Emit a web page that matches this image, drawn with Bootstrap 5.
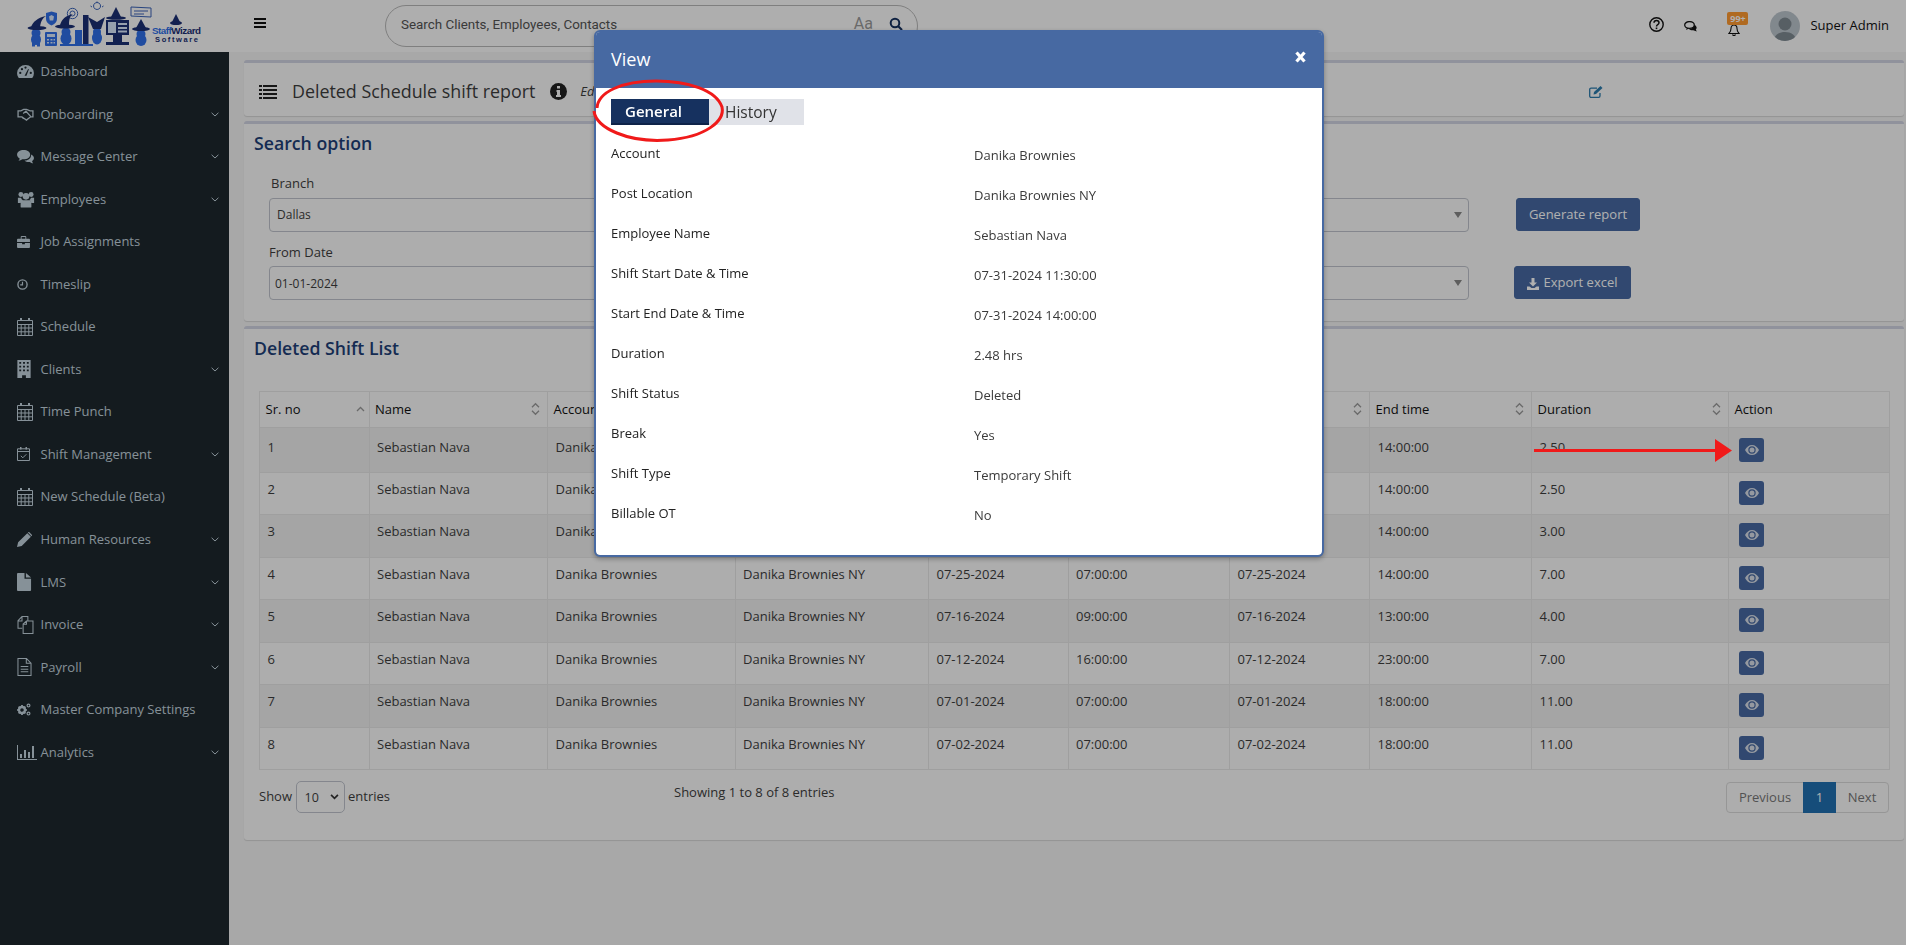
<!DOCTYPE html>
<html lang="en">
<head>
<meta charset="utf-8">
<title>Deleted Schedule shift report</title>
<link rel="stylesheet" href="https://cdn.jsdelivr.net/npm/bootstrap@5.3.0/dist/css/bootstrap.min.css">
<style>
html,body{height:945px;overflow:hidden}
body{font-family:"Open Sans","Liberation Sans",sans-serif;font-size:13px;color:#3e3e3e;background:#f4f4f4}
.sw-top{height:52px;background:#fcfcfc;padding:0}
.sw-brand{width:229px;height:52px;flex:none}
.sw-brand svg{display:block}
.sw-burger{position:relative;margin-left:25px;margin-bottom:6px;width:12px;height:10px;flex:none;border-top:2px solid #111;border-bottom:2px solid #111}
.sw-burger::after{content:"";position:absolute;left:0;right:0;top:2px;height:2px;background:#111}
.sw-search{margin-left:119px;width:533px;height:42px;border:1px solid #b9b9b9;border-radius:21px;padding:0 14px 0 15px;font-family:Roboto,"Liberation Sans",sans-serif;font-size:13.4px;color:#555}
.sw-search>span:first-child{margin-bottom:1px}
.sw-aa{margin-left:auto;color:#999;font-size:16px;margin-right:16px;margin-bottom:5px}
.sw-glass{margin-bottom:4px}
.sw-right{margin-left:auto;padding-right:17px;color:#111}
.sw-help{margin-bottom:4px}
.sw-chat{margin-left:20px}
.sw-name{font-size:13px;margin-left:10px;color:#111;margin-bottom:1px}
.sw-ava{width:30px;height:30px;border-radius:50%;overflow:hidden;margin-left:30px;background:#bcc5cc;margin-bottom:1px}
.sw-bellwrap{position:relative;width:12px;height:12px;margin-left:30px;margin-top:7px}
.sw-pill{position:absolute;left:-1px;top:-12px;width:21px;height:13px;background:#ff9a31;color:#fff;font-size:9px;font-weight:700;line-height:13px;text-align:center;border-radius:2px}
.sw-layout{height:893px}
.sw-side{width:229px;flex:none;background:#1d282e;height:893px}
.sw-side .list-group-item{background:transparent;border:0;border-radius:0;height:42.56px;padding:10px 10px 0 17px;color:#c3d2dc;font-size:13px;line-height:19.5px;display:flex;align-items:flex-start}
.sw-ic{width:23.5px;flex:none;height:19px;display:flex;align-items:center}
.sw-ic svg{display:block}
.sw-chev{margin-left:auto;margin-top:7px}
.sw-main{flex:1;min-width:0;padding:8px 2px 0 15px}
.sw-box{background:#fbfbfb;border:0;border-top:3px solid #d1d4e3;border-radius:3px;box-shadow:0 1px 1px rgba(0,0,0,.13);margin-bottom:5px}
.sw-box1{height:56px;display:flex;align-items:center;padding:4px 0 0 15px;position:relative}
.sw-title{font-size:17.85px;margin-left:15px;color:#3e3e3e}
.sw-info{margin-left:15px}
.sw-ed{font-style:italic;font-size:13px;margin-left:13px}
.sw-edit{position:absolute;left:1345px;top:23px}
.sw-box2{height:200px;padding:0 10px}
.sw-box3{height:514px;padding:0 16px 0 10px}
.sw-head{font-size:17.7px;font-weight:600;color:#1e3f78;line-height:24px;padding-top:7px}
.sw-grid{display:grid;grid-template-columns:581px 588px 1fr;column-gap:31px;padding-left:15px;margin-top:18px}
.sw-lab{display:block;margin:0 0 5px 2px;height:20px;line-height:20px;font-size:13px;color:#3e3e3e}
.sw-lab2{margin-left:0;margin-top:1px;margin-bottom:4px}
.sw-sel.form-select,.sw-inp.form-control{height:34px;border:1px solid #bfc3cc;border-radius:4px;font-size:12px;padding:0 7px;color:#3e3e3e;background-color:#fbfbfb;box-shadow:none}
.sw-inp.form-control{padding-left:5px}
.sw-sel.form-select{background-image:url("data:image/svg+xml,%3Csvg xmlns='http://www.w3.org/2000/svg' viewBox='0 0 8 6'%3E%3Cpath fill='%23888' d='M0 0h8L4 6z'/%3E%3C/svg%3E");background-size:8px 6px;background-position:right 6px center}
.sw-bcell{padding-top:25px}
.sw-btn.btn{background:#4769a2;border:1px solid #4769a2;color:#fff;font-size:13px;border-radius:3px;height:33px;padding:0;line-height:31px;display:block}
.sw-b1.btn{width:124px;margin-left:16px}
.sw-b2.btn{width:117px;margin-left:14px}
.sw-spc{height:9px;grid-column:1/-1}
.sw-tablewrap{margin:30.5px 0 0 5px;width:1630px}
.sw-table.table{table-layout:fixed;width:1630px;margin:0;border-color:#e6e6e6;font-size:13px;--bs-table-bg:transparent;--bs-table-striped-bg:#efefef;--bs-table-striped-color:#3e3e3e;--bs-table-color:#3e3e3e}
.sw-table th{font-weight:400;color:#111;padding:8px 5.5px;height:35px;line-height:19px;position:relative;border-bottom-width:1px;white-space:nowrap;overflow:hidden}
.sw-table td{padding:7px 7.5px 0;height:42.5px;line-height:19.5px;vertical-align:top;white-space:nowrap;overflow:hidden}
.sw-table tbody tr:first-child td{height:45px;padding-top:10px}
.sw-table td.sw-act{padding:8px 0 0 10px}
.sw-table tbody tr:first-child td.sw-act{padding-top:10px}
.sw-sort{position:absolute;right:7px;top:10px}
.sw-sort-up{right:4px;top:11px}
.sw-eye.btn{width:25px;height:24px;padding:0;background:#4769a2;border:0;border-radius:3px;display:flex;align-items:center;justify-content:center}
.sw-foot{position:relative;margin-left:5px;width:1630px;height:60px}
.sw-show{position:absolute;left:0;top:11px;height:32px;display:flex;align-items:center;gap:3.5px}
.sw-show .form-select{width:49px;height:32px;font-size:12.5px;padding:2px 0 0 8px;border-color:#bfc3cc;background-color:transparent;border-radius:5px;background-image:url("data:image/svg+xml,%3Csvg xmlns='http://www.w3.org/2000/svg' viewBox='0 0 10 7'%3E%3Cpath fill='none' stroke='%23333' stroke-width='2' d='M1 1l4 4 4-4'/%3E%3C/svg%3E");background-size:9px 6px;background-position:right 5px center}
.sw-count{position:absolute;left:415px;top:13px}
.sw-pages.pagination{position:absolute;right:0;top:12px;margin:0;--bs-pagination-font-size:13px;--bs-pagination-border-color:#d9d9d9;--bs-pagination-color:#777;--bs-pagination-bg:transparent;--bs-pagination-active-bg:#2070b1;--bs-pagination-active-border-color:#2070b1;--bs-pagination-border-radius:4px}
.sw-pages .page-link{height:31px;line-height:29px;padding:0 13px}
.sw-pages .page-item:first-child .page-link{width:78px;padding:0;text-align:center}
.sw-pages .page-item:nth-child(2) .page-link{width:33px;padding:0;text-align:center}
.sw-pages .page-item:last-child .page-link{width:54px;padding:0;text-align:center}
.modal-backdrop.show.sw-back{opacity:.31}
.sw-modal.modal{display:block;overflow:hidden}
.sw-modal .modal-dialog{max-width:none;width:730px;margin:30px 0 0 594px}
.sw-modal .modal-content{border:2px solid #4769a2;border-radius:6px;height:527px;box-shadow:0 2px 5px rgba(0,0,0,.3);overflow:hidden}
.sw-modal .modal-header{background:#4769a2;color:#fff;height:56px;border:0;border-radius:0;padding:0 15px;align-items:center}
.sw-modal .modal-title{font-size:18px;line-height:26px;font-weight:400;margin-top:-3px}
.sw-x{margin-left:auto;margin-top:-7px;margin-right:1px;background:none;border:0;padding:0;display:block}
.sw-modal .modal-body{padding:11px 15px 0;color:#222;font-size:13px}
.sw-tabs{height:26px;display:flex;margin-bottom:19px}
.sw-t1{width:98px;height:26px;background:#16315f;color:#fff;font-size:15px;font-weight:600;line-height:24px;padding-left:14px;box-shadow:inset 0 -2px 0 #0e2349}
.sw-t2{width:95px;height:26px;background:#e0e2e8;color:#333;font-size:15.5px;line-height:26px;padding-left:16px;font-weight:400}
.sw-mrow.row{--bs-gutter-x:30px;height:40px;margin-top:0}
.sw-mrow .sw-v{padding-top:2px;color:#3a3a3a}
.sw-mrow .sw-k{color:#222}
.sw-ellipse{position:fixed;left:590px;top:78px;z-index:1060;pointer-events:none}
.sw-arrow{position:fixed;left:1530px;top:436px;z-index:1060;pointer-events:none}
</style>
</head>
<body>
<svg width="0" height="0" class="d-none" aria-hidden="true">
<symbol id="i-dash" viewBox="0 0 18 16"><path fill="currentColor" d="M9 1a8.8 8.8 0 0 0-9 8.6c0 2 .7 3.800 1.800 5.200h14.400A8.200 8.200 0 0 0 18 9.600 8.800 8.800 0 0 0 9 1z"/><g fill="#1d282e"><circle cx="3.400" cy="9.500" r="1.200"/><circle cx="5.200" cy="5.500" r="1.200"/><circle cx="9" cy="3.800" r="1.200"/><circle cx="14.600" cy="9.500" r="1.200"/><path d="M8 12.500 11.800 5.300l.8.400L10 12.500z"/></g></symbol>
<symbol id="i-hand" viewBox="0 0 18 14"><path fill="none" stroke="currentColor" stroke-width="1.400" d="M1 3h3l3-1.500h3L14 3h3v6.500h-2.500L10 13 5 9.500H1zM6.500 6l3-2.500 5 5.500M5 9.500l2 2"/></symbol>
<symbol id="i-chat" viewBox="0 0 18 16"><path fill="currentColor" d="M7 1c3.900 0 7 2.200 7 5s-3.100 5-7 5l-1.500-.1C4.500 11.700 3 12.400 1.500 12.500c.8-.8 1.200-1.600 1.300-2.500C1.100 9.100 0 7.600 0 6c0-2.800 3.100-5 7-5z"/><path fill="currentColor" d="M15 5.800c1.800.8 3 2.200 3 3.800 0 1.300-.8 2.500-2 3.300.1.900.5 1.600 1.200 2.300-1.300 0-2.600-.5-3.500-1.300-2.300.3-4.500-.3-5.700-1.700 4 .2 7.200-2.400 7-6.400z"/></symbol>
<symbol id="i-users" viewBox="0 0 18 20"><g fill="currentColor"><circle cx="3.300" cy="5" r="2.700"/><circle cx="14.700" cy="5" r="2.700"/><circle cx="9" cy="7" r="3.700"/><path d="M0 8.500h3.500c.3 1.300 1 2.300 2 3-1.300.7-2.200 1.800-2.500 3H0zM18 8.500h-3.500c-.3 1.300-1 2.300-2 3 1.300.7 2.200 1.800 2.500 3h3zM5 11.500h8c1.300 1 2 2.500 2 4.500v2.500a1 1 0 0 1-1 1H4a1 1 0 0 1-1-1V16c0-2 .7-3.500 2-4.500z"/></g></symbol>
<symbol id="i-brief" viewBox="0 0 14 13"><path fill="currentColor" d="M5 0h4a1 1 0 0 1 1 1v2h3a1 1 0 0 1 1 1v2.500H0V4a1 1 0 0 1 1-1h3V1a1 1 0 0 1 1-1zm0 1v2h4V1zM0 7.500h5.500V9h3V7.500H14V12a1 1 0 0 1-1 1H1a1 1 0 0 1-1-1z"/></symbol>
<symbol id="i-clock" viewBox="0 0 12 12"><circle cx="6" cy="6" r="5" fill="none" stroke="currentColor" stroke-width="1.500"/><path fill="none" stroke="currentColor" stroke-width="1.300" d="M6 3v3.500H3.500"/></symbol>
<symbol id="i-cal" viewBox="0 0 16 18"><path fill="currentColor" d="M3 0h2v3H3zM11 0h2v3h-2z"/><path fill="none" stroke="currentColor" d="M.5 2.500h15v15H.5zM.5 6.500h15M.5 10h15M.5 13.800h15M4.200 6.500v11M8 6.500v11M11.800 6.500v11"/></symbol>
<symbol id="i-bld" viewBox="0 0 14 19"><path fill="currentColor" fill-rule="evenodd" d="M0 0h14v19H9v-3H5v3H0zM2 2v2h2V2zm4 0v2h2V2zm4 0v2h2V2zM2 6v2h2V6zm4 0v2h2V6zm4 0v2h2V6zM2 10v2h2v-2zm4 0v2h2v-2zm4 0v2h2v-2z"/></symbol>
<symbol id="i-cck" viewBox="0 0 13 14"><path fill="currentColor" d="M3 0h1.500v2.500H3zM8.500 0H10v2.500H8.500z"/><path fill="none" stroke="currentColor" d="M.5 1.800h12v11.700H.5zM.5 4.500h12M3.800 8.800l2 2 3.500-3.500"/></symbol>
<symbol id="i-pen" viewBox="0 0 16 16"><path fill="currentColor" d="M0 16l1.200-5L11 1.200 14.800 5 5 14.800zM12 .2a1 1 0 0 1 1.200 0l2.600 2.600a1 1 0 0 1 0 1.200l-.4.400L11.600.6z"/></symbol>
<symbol id="i-file" viewBox="0 0 16 19"><path fill="currentColor" d="M0 1a1 1 0 0 1 1-1h7v6h7v12a1 1 0 0 1-1 1H1a1 1 0 0 1-1-1zM9.500 0 15 4.800H9.500z"/></symbol>
<symbol id="i-copy" viewBox="0 0 17 19"><path fill="none" stroke="currentColor" stroke-width="1.100" d="M5 13H.6V5L4.800.6H11v4.600M4.800.8v4.400H.8M6 18.400V8.500l3.500-3.300h6.900v13.200zM9.500 5.300v3.400H6"/></symbol>
<symbol id="i-ftxt" viewBox="0 0 15 19"><path fill="none" stroke="currentColor" stroke-width="1.100" d="M.6.6h9l4.800 4.800v13H.6zM9.400.8v4.800h4.800M3.500 9h8M3.500 11.800h8M3.500 14.600h8"/></symbol>
<symbol id="i-cogs" viewBox="0 0 14 13"><g fill="none" stroke="currentColor"><circle cx="5" cy="7" r="3" stroke-width="2.400"/><path stroke-width="1.800" d="M5 2v1.200M5 10.800V12M.2 7h1.200M8.600 7h1.200M1.600 3.600l.9.9M7.500 9.500l.9.900M1.600 10.400l.9-.9M7.500 4.500l.9-.9"/><circle cx="11.500" cy="2.600" r="1.400" stroke-width="1.200"/><circle cx="11.500" cy="10.600" r="1.400" stroke-width="1.200"/></g></symbol>
<symbol id="i-bars" viewBox="0 0 20 15"><path fill="currentColor" d="M0 0h1v14h19v1H0zM3 9h2v4H3zM7 5h2v8H7zM11 7h2v6h-2zM15 1h2v12h-2z"/></symbol>
<symbol id="i-chev" viewBox="0 0 8 5"><path fill="none" stroke="currentColor" stroke-width="1" d="M.6.8 4 4l3.400-3.200"/></symbol>
<symbol id="i-sort" viewBox="0 0 9 14"><path fill="none" stroke="#9a9a9a" stroke-width="1.300" d="M1 5.200 4.500 1.700 8 5.200M1 8.800l3.500 3.500L8 8.800"/></symbol>
<symbol id="i-up" viewBox="0 0 9 14"><path fill="none" stroke="#9a9a9a" stroke-width="1.300" d="M1 8 4.500 4.500 8 8"/></symbol>
<symbol id="i-eye" viewBox="0 0 14 10"><path fill="#d8dee8" fill-rule="evenodd" d="M7 0c3 0 5.500 2 7 5-1.500 3-4 5-7 5S1.500 8 0 5c1.500-3 4-5 7-5zm0 1.300A3.700 3.700 0 1 0 7 8.700 3.700 3.700 0 0 0 7 1.300zm0 1.200a2.500 2.500 0 1 1 0 5 2.500 2.500 0 0 1 0-5z"/></symbol>
</svg>

<nav class="navbar sw-top d-flex flex-nowrap align-items-center justify-content-start">
  <div class="sw-brand">
    <svg width="229" height="52" viewBox="0 0 229 52">
      <!-- shield, calculator, chart, small props -->
      <path fill="#2f6fe8" d="M46 13l5.500-1.500L57 13v6c0 3-2 5-5.500 6.500C48 24 46 22 46 19z"/>
      <path fill="#d8e6fb" d="M51.500 15l2.500 1.500-.8 4h-3.400l-.8-4z"/>
      <rect x="45" y="32" width="12" height="14" rx="1" fill="#2f6fe8"/>
      <g fill="#d8e6fb"><rect x="47" y="34" width="8" height="3"/><rect x="47" y="39" width="2" height="1.500"/><rect x="50.500" y="39" width="2" height="1.500"/><rect x="53.500" y="39" width="1.500" height="1.500"/><rect x="47" y="42" width="2" height="1.500"/><rect x="50.500" y="42" width="2" height="1.500"/><rect x="53.500" y="42" width="1.500" height="1.500"/></g>
      <rect x="75" y="30" width="7" height="14" fill="#2f6fe8"/>
      <rect x="83" y="15" width="5.500" height="29" fill="#1b2f74"/>
      <rect x="60" y="44" width="33" height="2" fill="#2f6fe8"/>
      <g fill="none" stroke="#3a63b8">
        <circle cx="72.500" cy="13.500" r="5.200"/><circle cx="72.500" cy="13.500" r="2.500"/>
        <path d="M131 7l20 1v9l-20-1zM134 11h14M134 14h10"/>
        <path d="M97 9.500a3.500 3.500 0 1 1 .1 0zM92 7l-1.500-1M102 7l1.500-1M97 3V1.500"/>
      </g>
      <!-- wizards: blue head and robe -->
      <g fill="#2f6fe8">
        <circle cx="36" cy="33" r="4.500"/><ellipse cx="36" cy="39.500" rx="5" ry="5.500"/><rect x="32" y="43" width="3" height="3.500"/><rect x="37" y="43" width="3" height="3.500"/>
        <circle cx="66" cy="32" r="4.500"/><ellipse cx="66" cy="38.500" rx="5.500" ry="6.500"/>
        <circle cx="97" cy="32" r="4"/><ellipse cx="97" cy="38" rx="5" ry="6.500"/>
        <circle cx="141" cy="34" r="4.500"/><ellipse cx="141" cy="40" rx="5.500" ry="6"/>
      </g>
      <!-- hats -->
      <g fill="#1b2f74">
        <path d="M46 16c-3 2-5 4-6 11h-9c2-5 6-9 15-11z"/><ellipse cx="37" cy="28" rx="9.500" ry="2"/>
        <path d="M73 14c-3 2-4 5-4 11h-9c2-6 5-9 13-11z"/><ellipse cx="65" cy="26.500" rx="10" ry="2"/>
        <path d="M88 17l9 5 8-5-4 12h-8z"/>
        <path d="M116 7l5 10h-10z"/><ellipse cx="116" cy="18" rx="10" ry="1.800"/>
        <path d="M141 19l5 9h-10z"/><ellipse cx="141" cy="29" rx="9" ry="2"/>
        <path d="M176 14l4 8h-8z"/><ellipse cx="176" cy="23" rx="6" ry="2"/>
      </g>
      <!-- monitor -->
      <path fill="#1b2f74" d="M106 20h23v15h-23zM113 35h9v7h-9zM106 42h23v3h-23z"/>
      <g fill="#d8e6fb"><rect x="108" y="22" width="8" height="11"/><rect x="118" y="23" width="9" height="2"/><rect x="118" y="27" width="9" height="2"/><rect x="118" y="30.500" width="9" height="2"/></g>
      <text x="152" y="34" font-family="Liberation Sans,sans-serif" font-size="9.800" font-weight="700" fill="#2f6fe8" textLength="49">Staff<tspan fill="#1b2f74">Wizard</tspan></text>
      <text x="155" y="42" font-family="Liberation Sans,sans-serif" font-size="7.500" font-weight="700" fill="#1b2f74" textLength="43">Software</text>
    </svg>
  </div>
  <div class="sw-burger"></div>
  <div class="sw-search d-flex align-items-center"><span>Search Clients, Employees, Contacts</span><span class="sw-aa">Aa</span>
    <svg class="sw-glass" width="14" height="14" viewBox="0 0 14 14"><circle cx="6" cy="6" r="4.300" fill="none" stroke="#16315f" stroke-width="2"/><path d="M9 9l4 4" stroke="#16315f" stroke-width="2.200"/></svg>
  </div>
  <div class="sw-right d-flex align-items-center">
    <svg class="sw-help" width="15" height="15" viewBox="0 0 15 15"><circle cx="7.500" cy="7.500" r="6.700" fill="none" stroke="#111" stroke-width="1.400"/><path d="M5 5.800c0-3 5-3 5 0 0 2-2.500 1.800-2.500 3.700" fill="none" stroke="#111" stroke-width="1.500"/><rect x="6.700" y="10.500" width="1.600" height="1.600" fill="#111"/></svg>
    <svg class="sw-chat" width="14" height="11" viewBox="0 0 14 11"><ellipse cx="5.500" cy="4" rx="4.800" ry="3.400" fill="none" stroke="#111" stroke-width="1.300"/><path d="M3 7l-1 2 3-1.500M10.500 4c2 .8 3 3 1.300 4.500l1 2-3.500-1.200c-1.500.2-3.500-.2-4.300-1.300 2.600.2 5-1.700 5.500-4z" fill="#111"/></svg>
    <span class="sw-bellwrap d-block"><svg class="d-block" width="12" height="12" viewBox="0 0 12 12"><path d="M6 1c2 0 3 1.500 3 3.500 0 2.500.5 3.500 2 5H1c1.500-1.500 2-2.500 2-5C3 2.500 4 1 6 1zM4.500 10.500c.5 1.500 2.500 1.500 3 0" fill="none" stroke="#111" stroke-width="1.100"/></svg><span class="sw-pill">99+</span></span>
    <span class="sw-ava d-block"><svg class="d-block" width="30" height="30" viewBox="0 0 30 30"><circle cx="15" cy="13" r="6.500" fill="#7f8a92"/><path d="M4 30c0-6 5-9 11-9s11 3 11 9z" fill="#7f8a92"/></svg></span>
    <span class="sw-name">Super Admin</span>
  </div>
</nav>

<div class="sw-layout d-flex">
  <aside class="sw-side">
    <div class="list-group list-group-flush">
      <a class="list-group-item"><span class="sw-ic"><svg width="17" height="15"><use href="#i-dash"/></svg></span>Dashboard</a>
      <a class="list-group-item"><span class="sw-ic"><svg width="17" height="13"><use href="#i-hand"/></svg></span>Onboarding<svg class="sw-chev" width="8" height="5"><use href="#i-chev"/></svg></a>
      <a class="list-group-item"><span class="sw-ic"><svg width="17" height="15"><use href="#i-chat"/></svg></span>Message Center<svg class="sw-chev" width="8" height="5"><use href="#i-chev"/></svg></a>
      <a class="list-group-item"><span class="sw-ic"><svg width="18" height="18"><use href="#i-users"/></svg></span>Employees<svg class="sw-chev" width="8" height="5"><use href="#i-chev"/></svg></a>
      <a class="list-group-item"><span class="sw-ic"><svg width="13" height="12"><use href="#i-brief"/></svg></span>Job Assignments</a>
      <a class="list-group-item"><span class="sw-ic"><svg width="11" height="11"><use href="#i-clock"/></svg></span>Timeslip</a>
      <a class="list-group-item"><span class="sw-ic"><svg width="16" height="18"><use href="#i-cal"/></svg></span>Schedule</a>
      <a class="list-group-item"><span class="sw-ic"><svg width="14" height="18"><use href="#i-bld"/></svg></span>Clients<svg class="sw-chev" width="8" height="5"><use href="#i-chev"/></svg></a>
      <a class="list-group-item"><span class="sw-ic"><svg width="16" height="18"><use href="#i-cal"/></svg></span>Time Punch</a>
      <a class="list-group-item"><span class="sw-ic"><svg width="13" height="14"><use href="#i-cck"/></svg></span>Shift Management<svg class="sw-chev" width="8" height="5"><use href="#i-chev"/></svg></a>
      <a class="list-group-item"><span class="sw-ic"><svg width="16" height="18"><use href="#i-cal"/></svg></span>New Schedule (Beta)</a>
      <a class="list-group-item"><span class="sw-ic"><svg width="15" height="15"><use href="#i-pen"/></svg></span>Human Resources<svg class="sw-chev" width="8" height="5"><use href="#i-chev"/></svg></a>
      <a class="list-group-item"><span class="sw-ic"><svg width="15" height="18"><use href="#i-file"/></svg></span>LMS<svg class="sw-chev" width="8" height="5"><use href="#i-chev"/></svg></a>
      <a class="list-group-item"><span class="sw-ic"><svg width="17" height="18"><use href="#i-copy"/></svg></span>Invoice<svg class="sw-chev" width="8" height="5"><use href="#i-chev"/></svg></a>
      <a class="list-group-item"><span class="sw-ic"><svg width="15" height="18"><use href="#i-ftxt"/></svg></span>Payroll<svg class="sw-chev" width="8" height="5"><use href="#i-chev"/></svg></a>
      <a class="list-group-item"><span class="sw-ic"><svg width="14" height="13"><use href="#i-cogs"/></svg></span>Master Company Settings</a>
      <a class="list-group-item"><span class="sw-ic"><svg width="20" height="15"><use href="#i-bars"/></svg></span>Analytics<svg class="sw-chev" width="8" height="5"><use href="#i-chev"/></svg></a>
    </div>
  </aside>

  <main class="sw-main">
    <section class="card sw-box sw-box1 flex-row">
      <svg width="18" height="14" viewBox="0 0 18 14"><path fill="#222" d="M0 0h3v2H0zM4 0h14v2H4zM0 4h3v2H0zM4 4h14v2H4zM0 8h3v2H0zM4 8h14v2H4zM0 12h3v2H0zM4 12h14v2H4z"/></svg>
      <span class="sw-title">Deleted Schedule shift report</span>
      <svg class="sw-info" width="17" height="17" viewBox="0 0 17 17"><circle cx="8.500" cy="8.500" r="8.500" fill="#222"/><path fill="#fbfbfb" d="M7 3h3v2.500H7zM6.500 7H10v5h1v2H6v-2h1V9h-.5z"/></svg>
      <span class="sw-ed">Edit</span>
      <svg class="sw-edit" width="14" height="12" viewBox="0 0 14 12"><path fill="none" stroke="#2a7bad" stroke-width="1.300" d="M11 7v3a1.300 1.300 0 0 1-1.300 1.300H2A1.300 1.300 0 0 1 .7 10V3.500A1.300 1.300 0 0 1 2 2.200h6"/><path fill="#2a7bad" d="M4.500 8.500l.5-2.500L11.500 0l2 2-6.500 6z"/></svg>
    </section>

    <section class="card sw-box sw-box2">
      <div class="sw-head">Search option</div>
      <div class="sw-grid">
        <div><label class="sw-lab">Branch</label><select class="form-select sw-sel"><option>Dallas</option></select></div>
        <div><label class="sw-lab">Employee</label><select class="form-select sw-sel"><option></option></select></div>
        <div class="sw-bcell"><a class="btn sw-btn sw-b1">Generate report</a></div>
        <div class="sw-spc"></div>
        <div><label class="sw-lab sw-lab2">From Date</label><input class="form-control sw-inp" value="01-01-2024"></div>
        <div><label class="sw-lab sw-lab2">To Date</label><select class="form-select sw-sel"><option></option></select></div>
        <div class="sw-bcell"><a class="btn sw-btn sw-b2"><svg class="me-1" width="12" height="12" viewBox="0 0 12 12"><path fill="#fff" d="M4.500 0h3v4.500H10L6 8.500 2 4.500h2.500zM0 8.500h2.500L4.500 10h3l2-1.500H12V12H0z"/></svg>Export excel</a></div>
      </div>
    </section>

    <section class="card sw-box sw-box3">
      <div class="sw-head">Deleted Shift List</div>
      <div class="sw-tablewrap">
        <table class="table table-bordered table-striped sw-table">
          <colgroup><col style="width:109.5px"><col style="width:178.5px"><col style="width:187.5px"><col style="width:193.5px"><col style="width:139.5px"><col style="width:161.5px"><col style="width:140px"><col style="width:162px"><col style="width:197px"><col style="width:161px"></colgroup>
          <thead><tr>
            <th>Sr. no<svg class="sw-sort sw-sort-up" width="9" height="14"><use href="#i-up"/></svg></th>
            <th>Name<svg class="sw-sort" width="9" height="14"><use href="#i-sort"/></svg></th>
            <th>Account<svg class="sw-sort" width="9" height="14"><use href="#i-sort"/></svg></th>
            <th>Post Location<svg class="sw-sort" width="9" height="14"><use href="#i-sort"/></svg></th>
            <th>Start date<svg class="sw-sort" width="9" height="14"><use href="#i-sort"/></svg></th>
            <th>Start time<svg class="sw-sort" width="9" height="14"><use href="#i-sort"/></svg></th>
            <th>End date<svg class="sw-sort" width="9" height="14"><use href="#i-sort"/></svg></th>
            <th>End time<svg class="sw-sort" width="9" height="14"><use href="#i-sort"/></svg></th>
            <th>Duration<svg class="sw-sort" width="9" height="14"><use href="#i-sort"/></svg></th>
            <th>Action</th>
          </tr></thead>
          <tbody>
            <tr><td>1</td><td>Sebastian Nava</td><td>Danika Brownies</td><td>Danika Brownies NY</td><td>07-31-2024</td><td>11:30:00</td><td>07-31-2024</td><td>14:00:00</td><td>2.50</td><td class="sw-act"><a class="btn sw-eye"><svg width="14" height="10"><use href="#i-eye"/></svg></a></td></tr>
            <tr><td>2</td><td>Sebastian Nava</td><td>Danika Brownies</td><td>Danika Brownies NY</td><td>07-30-2024</td><td>11:30:00</td><td>07-30-2024</td><td>14:00:00</td><td>2.50</td><td class="sw-act"><a class="btn sw-eye"><svg width="14" height="10"><use href="#i-eye"/></svg></a></td></tr>
            <tr><td>3</td><td>Sebastian Nava</td><td>Danika Brownies</td><td>Danika Brownies NY</td><td>07-29-2024</td><td>11:00:00</td><td>07-29-2024</td><td>14:00:00</td><td>3.00</td><td class="sw-act"><a class="btn sw-eye"><svg width="14" height="10"><use href="#i-eye"/></svg></a></td></tr>
            <tr><td>4</td><td>Sebastian Nava</td><td>Danika Brownies</td><td>Danika Brownies NY</td><td>07-25-2024</td><td>07:00:00</td><td>07-25-2024</td><td>14:00:00</td><td>7.00</td><td class="sw-act"><a class="btn sw-eye"><svg width="14" height="10"><use href="#i-eye"/></svg></a></td></tr>
            <tr><td>5</td><td>Sebastian Nava</td><td>Danika Brownies</td><td>Danika Brownies NY</td><td>07-16-2024</td><td>09:00:00</td><td>07-16-2024</td><td>13:00:00</td><td>4.00</td><td class="sw-act"><a class="btn sw-eye"><svg width="14" height="10"><use href="#i-eye"/></svg></a></td></tr>
            <tr><td>6</td><td>Sebastian Nava</td><td>Danika Brownies</td><td>Danika Brownies NY</td><td>07-12-2024</td><td>16:00:00</td><td>07-12-2024</td><td>23:00:00</td><td>7.00</td><td class="sw-act"><a class="btn sw-eye"><svg width="14" height="10"><use href="#i-eye"/></svg></a></td></tr>
            <tr><td>7</td><td>Sebastian Nava</td><td>Danika Brownies</td><td>Danika Brownies NY</td><td>07-01-2024</td><td>07:00:00</td><td>07-01-2024</td><td>18:00:00</td><td>11.00</td><td class="sw-act"><a class="btn sw-eye"><svg width="14" height="10"><use href="#i-eye"/></svg></a></td></tr>
            <tr><td>8</td><td>Sebastian Nava</td><td>Danika Brownies</td><td>Danika Brownies NY</td><td>07-02-2024</td><td>07:00:00</td><td>07-02-2024</td><td>18:00:00</td><td>11.00</td><td class="sw-act"><a class="btn sw-eye"><svg width="14" height="10"><use href="#i-eye"/></svg></a></td></tr>
          </tbody>
        </table>
      </div>
      <div class="sw-foot">
        <div class="sw-show"><span>Show</span><select class="form-select sw-sel"><option>10</option></select><span>entries</span></div>
        <div class="sw-count">Showing 1 to 8 of 8 entries</div>
        <ul class="pagination sw-pages">
          <li class="page-item"><a class="page-link">Previous</a></li>
          <li class="page-item active"><a class="page-link">1</a></li>
          <li class="page-item"><a class="page-link">Next</a></li>
        </ul>
      </div>
    </section>
  </main>
</div>

<div class="modal-backdrop show sw-back"></div>
<div class="modal sw-modal" tabindex="-1">
  <div class="modal-dialog">
    <div class="modal-content">
      <div class="modal-header">
        <h5 class="modal-title">View</h5>
        <button class="sw-x" type="button" aria-label="Close"><svg class="d-block" width="11" height="12" viewBox="0 0 11 12"><path d="M1.500 1.500l8 9M9.500 1.500l-8 9" stroke="#fff" stroke-width="3.200"/></svg></button>
      </div>
      <div class="modal-body">
        <div class="sw-tabs"><div class="sw-t1">General</div><div class="sw-t2">History</div></div>
        <div class="row sw-mrow"><div class="col-6 sw-k">Account</div><div class="col-6 sw-v">Danika Brownies</div></div>
        <div class="row sw-mrow"><div class="col-6 sw-k">Post Location</div><div class="col-6 sw-v">Danika Brownies NY</div></div>
        <div class="row sw-mrow"><div class="col-6 sw-k">Employee Name</div><div class="col-6 sw-v">Sebastian Nava</div></div>
        <div class="row sw-mrow"><div class="col-6 sw-k">Shift Start Date &amp; Time</div><div class="col-6 sw-v">07-31-2024 11:30:00</div></div>
        <div class="row sw-mrow"><div class="col-6 sw-k">Start End Date &amp; Time</div><div class="col-6 sw-v">07-31-2024 14:00:00</div></div>
        <div class="row sw-mrow"><div class="col-6 sw-k">Duration</div><div class="col-6 sw-v">2.48 hrs</div></div>
        <div class="row sw-mrow"><div class="col-6 sw-k">Shift Status</div><div class="col-6 sw-v">Deleted</div></div>
        <div class="row sw-mrow"><div class="col-6 sw-k">Break</div><div class="col-6 sw-v">Yes</div></div>
        <div class="row sw-mrow"><div class="col-6 sw-k">Shift Type</div><div class="col-6 sw-v">Temporary Shift</div></div>
        <div class="row sw-mrow"><div class="col-6 sw-k">Billable OT</div><div class="col-6 sw-v">No</div></div>
      </div>
    </div>
  </div>
</div>

<svg class="sw-ellipse" width="138" height="66" viewBox="0 0 138 66"><path d="M7 30C8 14 32 3 66 3c32 0 60 9 66 26 3 14-16 30-54 33C38 65 6 50 4 33" fill="none" stroke="#f01a1a" stroke-width="3"/></svg>
<svg class="sw-arrow" width="204" height="30" viewBox="0 0 204 30"><path d="M4 14.500h186" stroke="#f01a1a" stroke-width="3"/><path d="M185 3l17 11.500L185 26z" fill="#f01a1a"/></svg>
</body>
</html>
